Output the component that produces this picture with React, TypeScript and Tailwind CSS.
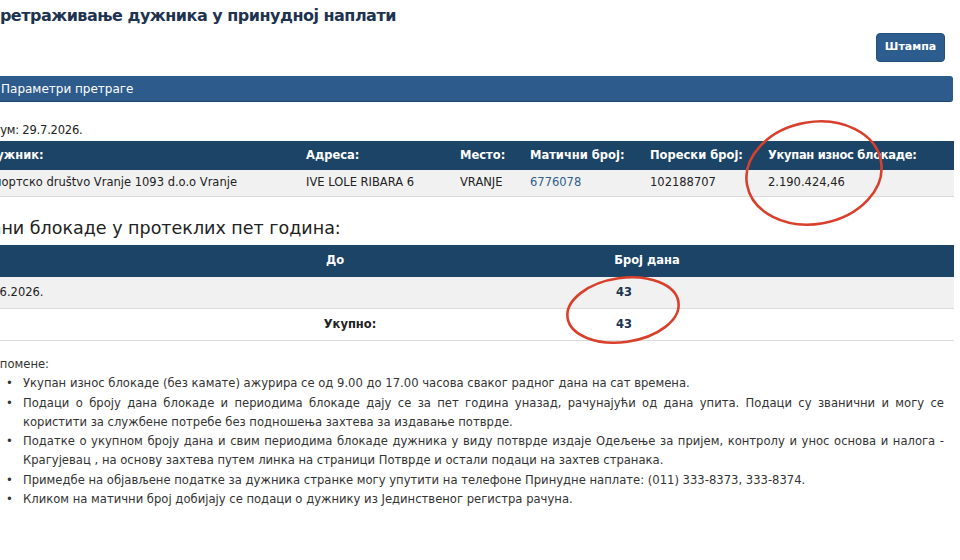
import React from 'react';

const notes = [
  'Укупан износ блокаде (без камате) ажурира се од 9.00 до 17.00 часова сваког радног дана на сат времена.',
  'Подаци о броју дана блокаде и периодима блокаде дају се за пет година уназад, рачунајући од дана упита. Подаци су званични и могу се користити за службене потребе без подношења захтева за издавање потврде.',
  'Податке о укупном броју дана и свим периодима блокаде дужника у виду потврде издаје Одељење за пријем, контролу и унос основа и налога - Крагујевац , на основу захтева путем линка на страници Потврде и остали подаци на захтев странака.',
  'Примедбе на објављене податке за дужника странке могу упутити на телефоне Принудне наплате: (011) 333-8373, 333-8374.',
  'Кликом на матични број добијају се подаци о дужнику из Јединственог регистра рачуна.',
];

const App = () => {
  return (
    <div className="relative w-[960px] h-[560px] overflow-hidden bg-white text-[#222] font-['DejaVu_Sans',sans-serif] text-[11.5px]">
      <div className="ml-[-22px] w-[976px]">
        <h1 className="pt-[6px] ml-[9px] text-[16px] leading-[20px] font-bold tracking-[-0.5px] text-[#1e3350]">
          Претраживање дужника у принудној наплати
        </h1>

        <div className="mt-[7px] flex justify-end pr-[9px]">
          <button className="h-[29px] w-[69px] rounded-[4px] border border-[#24507e] bg-[#2d5c8f] text-[11px] font-bold text-white">
            Штампа
          </button>
        </div>

        {/* search parameters panel */}
        <div className="mt-[14px] mr-px h-[26px] flex items-center rounded-r-[3px] border-b border-[#1f4670] bg-[#2d5b8c] pl-[23px] text-[12px] text-white">
          Параметри претраге
        </div>

        <p className="mt-[20px] leading-[16px] tracking-[-0.2px]">Датум: 29.7.2026.</p>

        {/* debtor table */}
        <div className="mt-[3px]">
          <div className="grid h-[29px] grid-cols-[320px_154px_70px_120px_118px_1fr] items-center bg-[#1b4467] font-bold text-white">
            <div className="px-2">Дужник:</div>
            <div className="px-2">Адреса:</div>
            <div className="px-2">Место:</div>
            <div className="px-2">Матични број:</div>
            <div className="px-2">Порески број:</div>
            <div className="px-2 tracking-[-0.3px]">Укупан износ блокаде:</div>
          </div>
          <div className="grid h-[27px] grid-cols-[320px_154px_70px_120px_118px_1fr] items-center border-b border-[#d9d9d9] bg-[#f1f1f1]">
            <div className="px-2 whitespace-nowrap">Спортско društvo Vranje 1093 d.o.o Vranje</div>
            <div className="px-2">IVE LOLE RIBARA 6</div>
            <div className="px-2">VRANJE</div>
            <div className="px-2 text-[#2f5f8a]">6776078</div>
            <div className="px-2">102188707</div>
            <div className="px-2">2.190.424,46</div>
          </div>
        </div>

        <h2 className="mt-[20px] ml-[-1px] text-[17.5px] leading-[23px] text-[#222]">
          Дани блокаде у протеклих пет година:
        </h2>

        {/* blocking periods table */}
        <div className="mt-[5px] ml-[-12px]">
          <div className="grid h-[32px] grid-cols-[224px_290px_334px_1fr] items-center bg-[#1b4467] font-bold text-white">
            <div className="px-2">Од</div>
            <div className="px-2 text-center">До</div>
            <div className="px-2 text-center">Број дана</div>
            <div />
          </div>
          <div className="grid h-[32px] grid-cols-[224px_290px_334px_1fr] items-center border-b border-[#dcdcdc] bg-[#f1f1f1]">
            <div className="px-2">18.06.2026.</div>
            <div />
            <div className="pl-[136px] font-bold text-[#1e3350]">43</div>
            <div />
          </div>
          <div className="grid h-[32px] grid-cols-[224px_290px_334px_1fr] items-center border-b border-[#dcdcdc]">
            <div />
            <div className="pl-[38px] pr-2 text-center font-bold">Укупно:</div>
            <div className="pl-[136px] font-bold text-[#1e3350]">43</div>
            <div />
          </div>
        </div>

        {/* notes */}
        <div className="mt-[14px] pr-[10px] text-[11.6px] leading-[19.3px] text-[#333]">
          <p className="ml-[6px]">Напомене:</p>
          <ul>
            {notes.map((n) => (
              <li key={n} className="flex">
                <span className="w-[45px] shrink-0 pl-[28px]">•</span>
                <span className="text-justify">{n}</span>
              </li>
            ))}
          </ul>
        </div>
      </div>

      {/* red hand-drawn marks */}
      <svg className="pointer-events-none absolute left-0 top-0" width="960" height="560">
        <ellipse cx="814" cy="173" rx="68" ry="51" transform="rotate(-10 814 173)" fill="none" stroke="#d8402c" strokeWidth="2.6" />
        <ellipse cx="623" cy="310" rx="56" ry="32" transform="rotate(-8 623 310)" fill="none" stroke="#d8402c" strokeWidth="2.6" />
      </svg>
    </div>
  );
};

export default App;
